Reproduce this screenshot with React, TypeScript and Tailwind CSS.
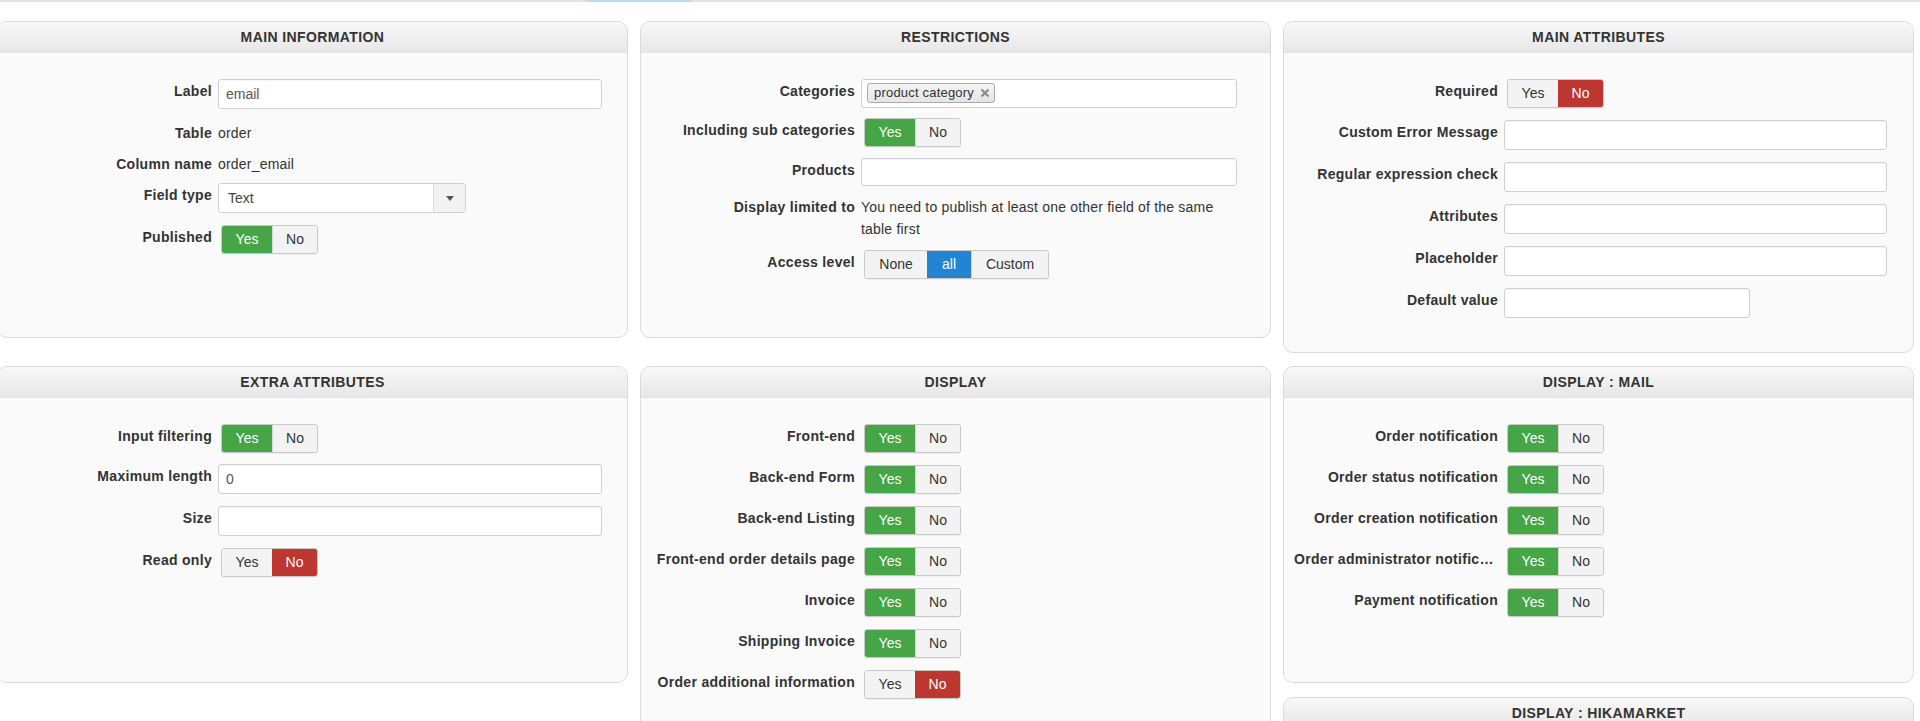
import React from "react";

const GREEN = "bg-[#46a546] text-white";
const RED = "bg-[#bd362f] text-white";
const BLUE = "bg-[#2384d3] text-white";
const OFF = "bg-[#f3f3f3] text-[#333]";

const Panel = ({ title, className = "", children }) => (
  <div
    className={`overflow-hidden rounded-[10px] border border-[#dadada] bg-[#fafafa] ${className}`}
  >
    <div className="flex h-[31px] items-center justify-center border-b border-[#e2e2e2] bg-linear-to-b from-[#f8f8f8] to-[#e7e7e7] text-[14px] font-bold uppercase tracking-[0.4px] text-[#333]">
      {title}
    </div>
    <div className="pl-[10px] pt-[26px]">{children}</div>
  </div>
);

const Row = ({ label, className = "mb-3", labelClass = "pt-[2px] leading-5", children }) => (
  <div className={`flex items-start ${className}`}>
    <div
      className={`w-[204px] shrink-0 truncate text-right font-bold tracking-[0.3px] text-[#333] ${labelClass}`}
    >
      {label}
    </div>
    <div className="ml-[6px]">{children}</div>
  </div>
);

const Input = ({ value = "", w = "w-[384px]", h = "h-[30px]" }) => (
  <div
    className={`${w} ${h} flex items-center rounded-[3px] border border-[#d0d0d0] bg-white pl-[7px] text-[#555] shadow-[inset_0_1px_1px_rgba(0,0,0,0.04)]`}
  >
    {value}
  </div>
);

// options: [text, width class, active colour or null]
const Toggle = ({ options }) => (
  <div className="ml-[3px] flex h-[29px] overflow-hidden rounded-[3px] border border-[#c9c9c9] shadow-[0_1px_1px_rgba(0,0,0,0.05)]">
    {options.map(([text, w, on], i) => (
      <div
        key={i}
        className={`flex h-full items-center justify-center ${w} ${on ? on : OFF} ${
          i > 0 && !on ? "border-l border-[#d4d4d4]" : ""
        }`}
      >
        {text}
      </div>
    ))}
  </div>
);

const YesNo = ({ yes = true }) => (
  <Toggle
    options={[
      ["Yes", "w-[50px]", yes ? GREEN : null],
      ["No", "w-[45px]", yes ? null : RED],
    ]}
  />
);

const TextRow = ({ label, value }) => (
  <Row label={label} className="mb-3 h-[19px]">
    <div className="pt-[2px] leading-5 tracking-[0.2px] text-[#333]">{value}</div>
  </Row>
);

const Select = () => (
  <div className="flex h-[30px] w-[248px] overflow-hidden rounded-[3px] border border-[#d0d0d0] bg-white">
    <div className="flex flex-1 items-center pl-[9px] text-[#444]">Text</div>
    <div className="flex w-[32px] items-center justify-center border-l border-[#dcdcdc] bg-[#f2f2f2]">
      <svg width="8" height="5" viewBox="0 0 8 5">
        <path d="M0 0 L8 0 L4 5 Z" fill="#555" />
      </svg>
    </div>
  </div>
);

const Categories = () => (
  <div className="flex h-[29px] w-[376px] items-start rounded-[3px] border border-[#d0d0d0] bg-white pl-[5px] pt-[3px]">
    <div className="flex h-[20px] items-center gap-[6px] rounded-[3px] border border-[#aaa] bg-linear-to-b from-[#f4f4f4] to-[#e4e4e4] pl-[6px] pr-[4px] text-[13px] tracking-[0.2px] text-[#333]">
      product category
      <svg width="10" height="10" viewBox="0 0 10 10">
        <path d="M1.5 1.5 L8.5 8.5 M8.5 1.5 L1.5 8.5" stroke="#8a8a8a" strokeWidth="2.2" />
      </svg>
    </div>
  </div>
);

export default function App() {
  return (
    <div className="min-h-screen overflow-hidden bg-white font-['Liberation_Sans',Arial,sans-serif] text-[14px] text-[#333]">
      <div className="flex h-[2px] bg-[#e3e3e3]">
        <div className="w-[585px]" />
        <div className="w-[107px] bg-[#bcdcf0]" />
      </div>

      <div className="ml-[-3px] mt-[19px] grid grid-cols-[631px_631px_631px] items-start gap-x-[12px] gap-y-[13px]">
        <Panel title="Main information" className="h-[317px]">
          <Row label="Label">
            <Input value="email" />
          </Row>
          <TextRow label="Table" value="order" />
          <TextRow label="Column name" value="order_email" />
          <Row label="Field type">
            <Select />
          </Row>
          <Row label="Published">
            <YesNo />
          </Row>
        </Panel>

        <Panel title="Restrictions" className="h-[317px]">
          <Row label="Categories" className="mb-[10px]">
            <Categories />
          </Row>
          <Row label="Including sub categories" className="mb-[11px]">
            <YesNo />
          </Row>
          <Row label="Products" className="mb-[10px]">
            <Input w="w-[376px]" h="h-[28px]" />
          </Row>
          <Row label="Display limited to" className="mb-[10px]" labelClass="pt-0 leading-[22px]">
            <div className="w-[380px] leading-[22px] tracking-[0.2px] text-[#333]">
              You need to publish at least one other field of the same table first
            </div>
          </Row>
          <Row label="Access level">
            <Toggle
              options={[
                ["None", "w-[62px]", null],
                ["all", "w-[44px]", BLUE],
                ["Custom", "w-[77px]", null],
              ]}
            />
          </Row>
        </Panel>

        <Panel title="Main attributes" className="h-[332px]">
          <Row label="Required">
            <YesNo yes={false} />
          </Row>
          <Row label="Custom Error Message">
            <Input w="w-[383px]" />
          </Row>
          <Row label="Regular expression check">
            <Input w="w-[383px]" />
          </Row>
          <Row label="Attributes">
            <Input w="w-[383px]" />
          </Row>
          <Row label="Placeholder">
            <Input w="w-[383px]" />
          </Row>
          <Row label="Default value">
            <Input w="w-[246px]" />
          </Row>
        </Panel>

        <Panel title="Extra attributes" className="h-[317px]">
          <Row label="Input filtering" className="mb-[11px]">
            <YesNo />
          </Row>
          <Row label="Maximum length">
            <Input value="0" />
          </Row>
          <Row label="Size">
            <Input />
          </Row>
          <Row label="Read only">
            <YesNo yes={false} />
          </Row>
        </Panel>

        <Panel title="Display" className="h-[400px]">
          <Row label="Front-end">
            <YesNo />
          </Row>
          <Row label="Back-end Form">
            <YesNo />
          </Row>
          <Row label="Back-end Listing">
            <YesNo />
          </Row>
          <Row label="Front-end order details page">
            <YesNo />
          </Row>
          <Row label="Invoice">
            <YesNo />
          </Row>
          <Row label="Shipping Invoice">
            <YesNo />
          </Row>
          <Row label="Order additional information">
            <YesNo yes={false} />
          </Row>
        </Panel>

        <div className="flex flex-col gap-[14px]">
          <Panel title="Display : Mail" className="h-[317px]">
            <Row label="Order notification">
              <YesNo />
            </Row>
            <Row label="Order status notification">
              <YesNo />
            </Row>
            <Row label="Order creation notification">
              <YesNo />
            </Row>
            <Row label="Order administrator notification">
              <YesNo />
            </Row>
            <Row label="Payment notification">
              <YesNo />
            </Row>
          </Panel>
          <Panel title="Display : HikaMarket" className="h-[200px]" />
        </div>
      </div>
    </div>
  );
}
